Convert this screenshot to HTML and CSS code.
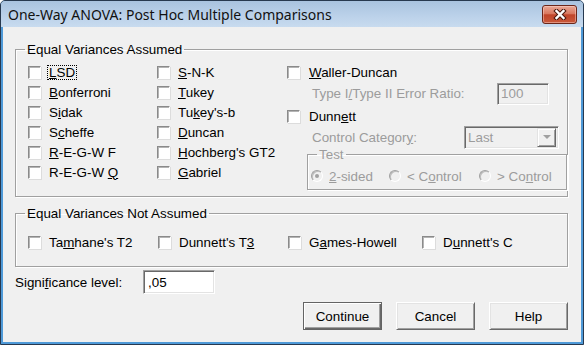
FILE: index.html
```html
<!DOCTYPE html>
<html lang="en">
   <head>
      <meta charset="UTF-8" />
      <title>One-Way ANOVA: Post Hoc Multiple Comparisons</title>
      <link rel="stylesheet" href="styles.css">
   </head>
   <body>
      <div class="window">
         <div class="titlebar">
            <span class="title">One-Way ANOVA: Post Hoc Multiple Comparisons</span>
            <button class="close" aria-label="Close">
               <svg width="14" height="11" viewBox="0 0 14 11">
                  <path d="M3.5 2 L10.5 9 M10.5 2 L3.5 9" stroke="#4a1a10" stroke-width="4.4" stroke-linecap="square" fill="none" />
                  <path d="M3.5 2 L10.5 9 M10.5 2 L3.5 9" stroke="#fff" stroke-width="2.4" stroke-linecap="square" fill="none" />
               </svg>
            </button>
         </div>
         <div class="client">
            <fieldset class="group equal">
               <legend>Equal Variances Assumed</legend>
               <div class="equal-grid">
                  <div class="col col-1">
                     <label class="check"><span class="box"></span><span class="focus"><u>L</u>SD</span></label>
                     <label class="check"><span class="box"></span><span><u>B</u>onferroni</span></label>
                     <label class="check"><span class="box"></span><span>S<u>i</u>dak</span></label>
                     <label class="check"><span class="box"></span><span>S<u>c</u>heffe</span></label>
                     <label class="check"><span class="box"></span><span><u>R</u>-E-G-W F</span></label>
                     <label class="check"><span class="box"></span><span>R-E-G-W <u>Q</u></span></label>
                  </div>
                  <div class="col col-2">
                     <label class="check"><span class="box"></span><span><u>S</u>-N-K</span></label>
                     <label class="check"><span class="box"></span><span><u>T</u>ukey</span></label>
                     <label class="check"><span class="box"></span><span>Tu<u>k</u>ey's-b</span></label>
                     <label class="check"><span class="box"></span><span><u>D</u>uncan</span></label>
                     <label class="check"><span class="box"></span><span><u>H</u>ochberg's GT2</span></label>
                     <label class="check"><span class="box"></span><span><u>G</u>abriel</span></label>
                  </div>
                  <div class="col col-3">
                     <label class="check waller"><span class="box"></span><span><u>W</u>aller-Duncan</span></label>
                     <div class="sub-row ratio">
                        <span class="dim">Type I<u>/</u>Type II Error Ratio:</span>
                        <span class="field off">100</span>
                     </div>
                     <label class="check dunnett"><span class="box"></span><span>Dunn<u>e</u>tt</span></label>
                     <div class="sub-row control">
                        <span class="dim">Control Categor<u>y</u>:</span>
                        <span class="combo"><span class="combo-text">Last</span><span class="drop"><span class="arrow"></span></span></span>
                     </div>
                     <fieldset class="group test">
                        <legend class="dim">Test</legend>
                        <div class="radios">
                           <span class="radio-item r-1"><span class="radio on"></span><span class="dim"><u>2</u>-sided</span></span>
                           <span class="radio-item r-2"><span class="radio"></span><span class="dim">&lt; C<u>o</u>ntrol</span></span>
                           <span class="radio-item r-3"><span class="radio"></span><span class="dim">&gt; Co<u>n</u>trol</span></span>
                        </div>
                     </fieldset>
                  </div>
               </div>
            </fieldset>

            <fieldset class="group unequal">
               <legend>Equal Variances Not Assumed</legend>
               <div class="unequal-row">
                  <label class="check u-1"><span class="box"></span><span>Ta<u>m</u>hane's T2</span></label>
                  <label class="check u-2"><span class="box"></span><span>Dunnett's T<u>3</u></span></label>
                  <label class="check u-3"><span class="box"></span><span>G<u>a</u>mes-Howell</span></label>
                  <label class="check u-4"><span class="box"></span><span>D<u>u</u>nnett's C</span></label>
               </div>
            </fieldset>

            <div class="sig-row">
               <span class="sig-label">Signi<u>f</u>icance level:</span>
               <span class="field sig">,05</span>
            </div>

            <div class="buttons">
               <button class="btn default">Continue</button>
               <button class="btn">Cancel</button>
               <button class="btn">Help</button>
            </div>
         </div>
      </div>
   </body>
</html>
```

FILE: styles.css
```css
body {
   margin: 0;
   padding: 0;
   font-family: 'Liberation Sans', Arial, sans-serif;
   font-size: 13.4px;
   line-height: 15px;
   color: #000;
}

u {
   text-decoration: underline;
   text-underline-offset: 1px;
}

div.window {
   width: 584px;
   height: 345px;
   box-sizing: border-box;
   border: 1px solid #27394f;
   border-radius: 5px 5px 0 0;
   background-color: #4f9ad8;
   display: flex;
   flex-direction: column;
   overflow: hidden;
}

div.titlebar {
   height: 26px;
   flex: none;
   display: flex;
   align-items: center;
   padding-left: 7px;
   padding-right: 6px;
   background: linear-gradient(#a9c3df, #bcd2ea 60%, #c8dbef);
}

span.title {
   font-family: 'Noto Sans', sans-serif;
   font-size: 14px;
   color: #111;
   padding-top: 1px;
}

button.close {
   margin-left: auto;
   width: 35px;
   height: 19px;
   padding: 0;
   border: 1px solid #6b2619;
   border-radius: 3px;
   background: linear-gradient(#e9a896, #d9785f 45%, #c0452a 52%, #c9583a);
   box-shadow: inset 0 0 0 1px rgba(255, 220, 210, 0.45);
   display: flex;
   justify-content: center;
   align-items: center;
}

div.client {
   flex: 1;
   margin: 0 2px 2px;
   background-color: #f0f0f0;
   padding: 15px 13px 0 12px;
}

fieldset.group {
   margin: 0;
   padding: 0;
   border: 1px solid #a0a0a0;
   box-shadow: inset 1px 1px #fff, 1px 1px #fff;
   min-width: 0;
}

fieldset.group legend {
   margin-left: 9px;
   padding: 0 2px;
   line-height: 15px;
}

div.equal-grid {
   display: flex;
   padding: 5px 0 6px 12px;
}

div.col {
   display: flex;
   flex-direction: column;
}

div.col-1 {
   width: 129px;
}

div.col-2 {
   width: 130px;
}

div.col-3 {
   flex: 1;
}

label.check {
   height: 20px;
   display: flex;
   align-items: center;
   white-space: nowrap;
}

span.box {
   width: 13px;
   height: 13px;
   box-sizing: border-box;
   flex: none;
   margin-right: 8px;
   background-color: #fff;
   border: 1px solid;
   border-color: #8a8a8a #fff #fff #8a8a8a;
   box-shadow: inset 1px 1px #b4b4b4, 1px 1px #dcdcdc;
}

label.waller span.box,
label.dunnett span.box {
   margin-right: 9px;
}

span.focus {
   border: 1px dotted #000;
   padding: 0 1px;
   margin-left: -2px;
   line-height: 13px;
}

.dim {
   color: #9c9c9c;
}

div.sub-row {
   display: flex;
   align-items: center;
   padding-left: 25px;
}

div.sub-row .dim {
   flex: 1;
}

div.ratio {
   height: 23px;
}

label.dunnett {
   height: 22px;
}

div.control {
   height: 20px;
}

span.field {
   box-sizing: border-box;
   border: 1px solid;
   border-color: #a0a0a0 #fff #fff #a0a0a0;
   box-shadow: inset 1px 1px #696969, inset -1px -1px #e3e3e3;
   padding: 0 3px;
   display: flex;
   align-items: center;
}

span.field.off {
   width: 52px;
   height: 22px;
   margin-right: 18px;
   background-color: #f0f0f0;
   color: #9c9c9c;
}

span.combo {
   width: 95px;
   height: 23px;
   margin-right: 8px;
   box-sizing: border-box;
   border: 1px solid;
   border-color: #a0a0a0 #fff #fff #a0a0a0;
   box-shadow: inset 1px 1px #696969, inset -1px -1px #e3e3e3;
   background-color: #f0f0f0;
   display: flex;
   align-items: center;
   padding: 2px 2px 2px 3px;
   color: #9c9c9c;
}

span.combo-text {
   flex: 1;
}

span.drop {
   width: 19px;
   height: 19px;
   box-sizing: border-box;
   border: 1px solid;
   border-color: #e3e3e3 #696969 #696969 #e3e3e3;
   box-shadow: inset 1px 1px #fff, inset -1px -1px #a0a0a0;
   background-color: #f0f0f0;
   display: flex;
   justify-content: center;
   align-items: center;
}

span.arrow {
   width: 0;
   height: 0;
   border-left: 4px solid transparent;
   border-right: 4px solid transparent;
   border-top: 4px solid #a0a0a0;
}

fieldset.test {
   margin-left: 20px;
}

div.radios {
   display: flex;
   align-items: center;
   height: 20px;
   padding: 4px 0 3px 3px;
}

span.radio-item {
   display: flex;
   align-items: center;
   white-space: nowrap;
}

span.r-1 {
   width: 78px;
}

span.r-2 {
   width: 90px;
}

span.radio {
   width: 12px;
   height: 12px;
   box-sizing: border-box;
   border-radius: 50%;
   border: 1px solid;
   border-color: #a0a0a0 #fff #fff #a0a0a0;
   box-shadow: inset 1px 1px #bdbdbd;
   background-color: #f0f0f0;
   margin-right: 6px;
   display: flex;
   justify-content: center;
   align-items: center;
}

span.radio.on::after {
   content: '';
   width: 4px;
   height: 4px;
   border-radius: 50%;
   background-color: #a0a0a0;
}

fieldset.unequal {
   margin-top: 9px;
}

div.unequal-row {
   display: flex;
   padding: 11px 0 14px 12px;
}

label.u-1,
label.u-2 {
   width: 130px;
}

label.u-3 {
   width: 134px;
}

div.sig-row {
   display: flex;
   align-items: center;
   height: 24px;
   margin-top: 3px;
}

span.sig-label {
   width: 128px;
}

span.field.sig {
   width: 72px;
   height: 24px;
   background-color: #fff;
   padding-left: 4px;
}

div.buttons {
   display: flex;
   justify-content: flex-end;
   gap: 14px;
   margin-top: 8px;
}

button.btn {
   width: 79px;
   height: 28px;
   padding: 0;
   font-family: 'Liberation Sans', Arial, sans-serif;
   font-size: 13.4px;
   color: #000;
   background-color: #f0f0f0;
   border: 1px solid;
   border-color: #fff #696969 #696969 #fff;
   box-shadow: inset 1px 1px #e3e3e3, inset -1px -1px #a0a0a0;
}

button.default {
   border-color: #646464;
   box-shadow: inset 1px 1px #fff, inset -1px -1px #696969, inset -2px -2px #a0a0a0;
}
```
